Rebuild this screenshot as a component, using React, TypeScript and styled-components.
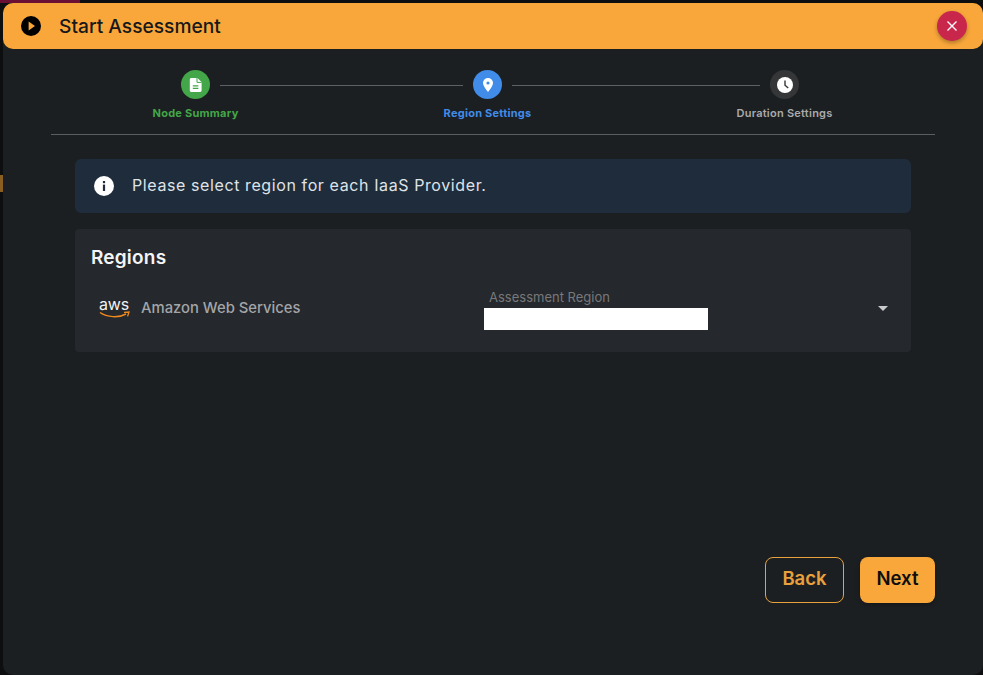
import React from "react";
import styled, { createGlobalStyle } from "styled-components";

const Global = createGlobalStyle`
  html, body { margin: 0; padding: 0; height: 100%; background: #0d0e10; overflow: hidden; }
  #root { height: 100%; }
  * { box-sizing: border-box; }
`;

const Backdrop = styled.div`
  position: relative;
  width: 983px;
  height: 675px;
  padding: 3px 0 0 3px;
  background: #0d0e10;
  font-family: Inter, "Open Sans", "Liberation Sans", sans-serif;
`;

const BackTopAccent = styled.div`
  position: absolute;
  left: 0;
  top: 0;
  width: 80px;
  height: 3px;
  background: #6b0f35;
`;

const BackSideAccent = styled.div`
  position: absolute;
  left: 0;
  top: 175px;
  width: 3px;
  height: 17px;
  background: #8a5d20;
`;

const Dialog = styled.div`
  position: relative;
  width: 980px;
  height: 672px;
  display: flex;
  flex-direction: column;
  background: #1c1f22;
  border-radius: 10px;
`;

const Header = styled.header`
  height: 46px;
  flex: none;
  display: flex;
  align-items: center;
  padding: 0 16px 0 18px;
  background: #f9a73a;
  border-radius: 10px;
`;

const HeaderTitle = styled.h1`
  flex: 1;
  margin: 0 0 0 18px;
  font-size: 19.2px;
  font-weight: 500;
  color: #17181a;
`;

const CloseButton = styled.button`
  width: 30px;
  height: 30px;
  padding: 0;
  border: 0;
  display: flex;
  align-items: center;
  justify-content: center;
  border-radius: 50%;
  background: #c8264b;
  box-shadow: 0 2px 4px rgba(0, 0, 0, 0.3);
`;

const Stepper = styled.div`
  height: 86px;
  flex: none;
  margin: 0 48px;
  padding: 21px 0 0 130px;
  border-bottom: 1px solid #5b5d60;
  display: flex;
  align-items: flex-start;
`;

const Step = styled.div`
  width: 29px;
  flex: none;
  display: flex;
  flex-direction: column;
  align-items: center;
`;

const StepCircle = styled.div<{ $bg: string }>`
  width: 29px;
  height: 29px;
  flex: none;
  border-radius: 50%;
  background: ${(p) => p.$bg};
  display: flex;
  align-items: center;
  justify-content: center;
`;

const StepLabel = styled.div<{ $color: string; $weight: number }>`
  margin-top: 7px;
  font-size: 11px;
  line-height: 14px;
  letter-spacing: 0.25px;
  font-weight: ${(p) => p.$weight};
  color: ${(p) => p.$color};
  white-space: nowrap;
`;

const Connector = styled.div<{ $w: number }>`
  width: ${(p) => p.$w}px;
  margin: 15px 10px 0;
  flex: none;
  height: 1px;
  background: #5e6063;
`;

const Content = styled.main`
  flex: 1;
  padding: 24px 72px 0;
  display: flex;
  flex-direction: column;
  gap: 16px;
`;

const InfoBar = styled.div`
  height: 54px;
  display: flex;
  align-items: center;
  gap: 18px;
  padding: 0 19px;
  border-radius: 6px;
  background: #1f2c3b;
  font-size: 16px;
  line-height: 20px;
  color: #dfe3e7;
  letter-spacing: 0.6px;
`;

const InfoText = styled.span`
  margin-bottom: 2px;
`;

const RegionsCard = styled.section`
  height: 123px;
  padding: 18px 16px 0;
  border-radius: 4px;
  background: #25282c;
`;

const RegionsTitle = styled.h2`
  margin: 0;
  font-size: 19px;
  line-height: 22px;
  font-weight: 600;
  letter-spacing: 0.2px;
  color: #f3f4f5;
`;

const ProviderRow = styled.div`
  margin-top: 15px;
  display: flex;
  align-items: center;
  height: 48px;
  padding-left: 1px;
`;

const ProviderName = styled.div`
  width: 343px;
  flex: none;
  margin-left: 11px;
  font-size: 14.8px;
  font-weight: 500;
  color: #a3a5a8;
`;

const SelectField = styled.div`
  flex: 1;
  height: 48px;
  display: flex;
  align-items: flex-start;
  justify-content: space-between;
  padding-right: 7px;
`;

const FieldStack = styled.div`
  display: flex;
  flex-direction: column;
  padding-top: 6px;
`;

const FieldLabel = styled.div`
  margin-left: 5px;
  font-size: 13px;
  line-height: 14px;
  color: #77797c;
`;

const Redacted = styled.div`
  width: 224px;
  height: 22px;
  margin-top: 4px;
  background: #fff;
`;

const Caret = styled.div`
  margin-top: 22px;
  width: 0;
  height: 0;
  border-left: 5px solid transparent;
  border-right: 5px solid transparent;
  border-top: 5px solid #c9cacb;
`;

const Footer = styled.footer`
  position: absolute;
  right: 48px;
  bottom: 72px;
  display: flex;
  gap: 16px;
`;

const ActionButton = styled.button<{ $primary?: boolean }>`
  height: 46px;
  width: ${(p) => (p.$primary ? 75 : 79)}px;
  padding: 0 0 5px;
  border-radius: 8px;
  font-family: inherit;
  font-size: 18.5px;
  font-weight: 600;
  border: ${(p) => (p.$primary ? "0" : "1px solid #e8a13c")};
  color: ${(p) => (p.$primary ? "#0d0e10" : "#e8a13c")};
  background: ${(p) => (p.$primary ? "#f9a73a" : "transparent")};
  box-shadow: ${(p) => (p.$primary ? "0 2px 4px rgba(0,0,0,0.3)" : "none")};
`;

const AwsLogo = styled.div`
  width: 32px;
  margin-left: 6px;
  flex: none;
  display: flex;
  flex-direction: column;
  align-items: center;
`;

const AwsText = styled.span`
  font-size: 16px;
  line-height: 13px;
  font-weight: 400;
  color: #f2f2f2;
  letter-spacing: -0.2px;
`;

export default function App() {
  return (
    <>
      <Global />
      <Backdrop>
        <BackTopAccent />
        <BackSideAccent />
        <Dialog>
          <Header>
            <svg width="20" height="20" viewBox="0 0 20 20">
              <circle cx="10" cy="10" r="10" fill="#000" />
              <path d="M7.6 5.6 L14 10 L7.6 14.4 Z" fill="#f9a73a" />
            </svg>
            <HeaderTitle>Start Assessment</HeaderTitle>
            <CloseButton aria-label="Close">
              <svg width="12" height="12" viewBox="0 0 12 12">
                <path d="M1.5 1.5 L10.5 10.5 M10.5 1.5 L1.5 10.5" stroke="#fff" strokeWidth="1.4" />
              </svg>
            </CloseButton>
          </Header>
          <Stepper>
            <Step>
              <StepCircle $bg="#43a648">
                <svg width="14" height="16" viewBox="0 0 14 16">
                  <path d="M2 1h6.4L12.6 5v8.6a1.4 1.4 0 0 1-1.4 1.4H2A1.4 1.4 0 0 1 .8 13.6V2.4A1.4 1.4 0 0 1 2 1z" fill="#fff" />
                  <path d="M8 1v4.4h4.6" fill="none" stroke="#43a648" strokeWidth="1" />
                  <path d="M3.8 8.8h5.6M3.8 11.4h5.6" stroke="#43a648" strokeWidth="1.3" />
                </svg>
              </StepCircle>
              <StepLabel $color="#43a648" $weight={700}>Node Summary</StepLabel>
            </Step>
            <Connector $w={243} />
            <Step>
              <StepCircle $bg="#418ce8">
                <svg width="14" height="16" viewBox="0 0 14 16">
                  <path d="M7 1a5 5 0 0 0-5 5c0 3.4 5 9 5 9s5-5.6 5-9a5 5 0 0 0-5-5z" fill="#fff" />
                  <circle cx="7" cy="6" r="1.6" fill="#418ce8" />
                </svg>
              </StepCircle>
              <StepLabel $color="#418ce8" $weight={700}>Region Settings</StepLabel>
            </Step>
            <Connector $w={248} />
            <Step>
              <StepCircle $bg="#353637">
                <svg width="16" height="16" viewBox="0 0 16 16">
                  <circle cx="8" cy="8" r="8" fill="#fff" />
                  <path d="M8 3.6V8.2L11.2 11" fill="none" stroke="#353637" strokeWidth="1.4" />
                </svg>
              </StepCircle>
              <StepLabel $color="#a9abad" $weight={600}>Duration Settings</StepLabel>
            </Step>
          </Stepper>
          <Content>
            <InfoBar>
              <svg width="20" height="20" viewBox="0 0 20 20">
                <circle cx="10" cy="10" r="10" fill="#fff" />
                <rect x="8.9" y="8.6" width="2.2" height="6.4" fill="#1f2c3b" />
                <rect x="8.9" y="5" width="2.2" height="2.2" fill="#1f2c3b" />
              </svg>
              <InfoText>Please select region for each IaaS Provider.</InfoText>
            </InfoBar>
            <RegionsCard>
              <RegionsTitle>Regions</RegionsTitle>
              <ProviderRow>
                <AwsLogo>
                  <AwsText>aws</AwsText>
                  <svg width="31" height="8" viewBox="0 0 31 8">
                    <path d="M1 1.5 C8 6.5 20 7 27 3" fill="none" stroke="#f08a1d" strokeWidth="1.5" />
                    <path d="M25 1.4 L30 1 L28.6 5.4" fill="none" stroke="#f08a1d" strokeWidth="1.3" />
                  </svg>
                </AwsLogo>
                <ProviderName>Amazon Web Services</ProviderName>
                <SelectField>
                  <FieldStack>
                    <FieldLabel>Assessment Region</FieldLabel>
                    <Redacted />
                  </FieldStack>
                  <Caret />
                </SelectField>
              </ProviderRow>
            </RegionsCard>
          </Content>
          <Footer>
            <ActionButton>Back</ActionButton>
            <ActionButton $primary>Next</ActionButton>
          </Footer>
        </Dialog>
      </Backdrop>
    </>
  );
}
